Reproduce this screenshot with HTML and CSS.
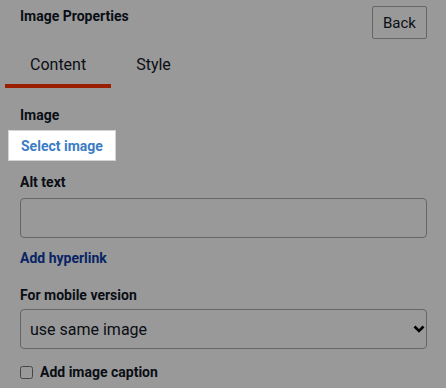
FILE: index.html
```html
<!DOCTYPE html>
<html lang="en">

<head>
    <meta charset="UTF-8">
    <meta name="viewport" content="width=device-width, initial-scale=1.0">
    <title>Image Properties</title>
    <link rel="stylesheet" href="styles.css">
</head>

<body>
    <div class="panel">
        <header class="panel-header">
            <h1 class="title">Image Properties</h1>
            <button class="back-btn">Back</button>
        </header>

        <ul class="tabs">
            <li class="tab active">Content</li>
            <li class="tab">Style</li>
        </ul>

        <section class="field">
            <h2 class="label">Image</h2>
            <a class="select-link" href="#">Select image</a>
        </section>

        <section class="field">
            <h2 class="label">Alt text</h2>
            <input class="text-input" type="text">
            <a class="hyperlink" href="#">Add hyperlink</a>
        </section>

        <section class="field mobile">
            <h2 class="label">For mobile version</h2>
            <div class="select-wrap">
                <select class="select-input">
                    <option>use same image</option>
                </select>
                <svg class="chevron" width="12" height="8" viewBox="0 0 12 8">
                    <path d="M1.5 1.5 L6 6 L10.5 1.5" fill="none" stroke="#000" stroke-width="2.6" />
                </svg>
            </div>
        </section>

        <label class="check-row">
            <input type="checkbox">
            <span>Add image caption</span>
        </label>
    </div>

    <!-- tour overlay -->
    <div class="overlay"></div>
</body>

</html>
```

FILE: styles.css
```css
* {
    padding: 0;
    margin: 0;
    box-sizing: border-box;
}

body {
    background-color: #ffffff;
    font-family: Roboto, "Liberation Sans", sans-serif;
    color: #111827;
}

.panel {
    padding: 0 19px 0 20px;
}

.panel-header {
    display: flex;
    justify-content: space-between;
    align-items: flex-start;
    padding-top: 6px;
}

.title {
    font-size: 14px;
    font-weight: 700;
    margin-top: 2px;
}

.back-btn {
    font-family: inherit;
    font-size: 15px;
    color: #111827;
    background: #ffffff;
    border: 1px solid #aaaaaa;
    border-radius: 2px;
    width: 55px;
    height: 33px;
}

.tabs {
    list-style: none;
    display: flex;
    margin-left: -15px;
    margin-top: 16px;
}

.tab {
    font-size: 16px;
    padding: 0 25px 10px;
    border-bottom: 4px solid transparent;
}

.tab.active {
    border-bottom-color: #ff3500;
}

.field {
    margin-top: 18px;
}

.label {
    font-size: 14px;
    font-weight: 700;
    line-height: 18px;
}

.select-link {
    position: relative;
    z-index: 10;
    display: inline-block;
    margin: 6px 0 0 -12px;
    padding: 7px 12px 6px;
    background: #ffffff;
    border: 1px solid #d4d4d4;
    color: #3b7dc4;
    font-size: 14px;
    font-weight: 700;
    text-decoration: none;
}

.field + .field {
    margin-top: 12px;
}

.field.mobile {
    margin-top: 20px;
}

.text-input,
.select-input {
    display: block;
    width: 100%;
    height: 40px;
    margin-top: 7px;
    border: 1px solid #aaaaaa;
    border-radius: 4px;
    background: #ffffff;
    font-family: inherit;
    font-size: 16px;
    color: #111827;
}

.select-wrap {
    position: relative;
    margin-top: 5px;
}

.select-input {
    margin-top: 0;
    padding-left: 9px;
    appearance: none;
}

.chevron {
    position: absolute;
    right: 2px;
    top: 16px;
    pointer-events: none;
}

.hyperlink {
    display: block;
    margin-top: 12px;
    color: #0e3ca8;
    font-size: 14px;
    font-weight: 700;
    text-decoration: none;
}

.check-row {
    display: flex;
    align-items: center;
    gap: 7px;
    margin-top: 15px;
    font-size: 14px;
    font-weight: 700;
}

.check-row input {
    width: 13px;
    height: 13px;
    margin: 0;
}

.overlay {
    position: fixed;
    inset: 0;
    background: rgba(0, 0, 0, 0.4);
    z-index: 5;
}
```
